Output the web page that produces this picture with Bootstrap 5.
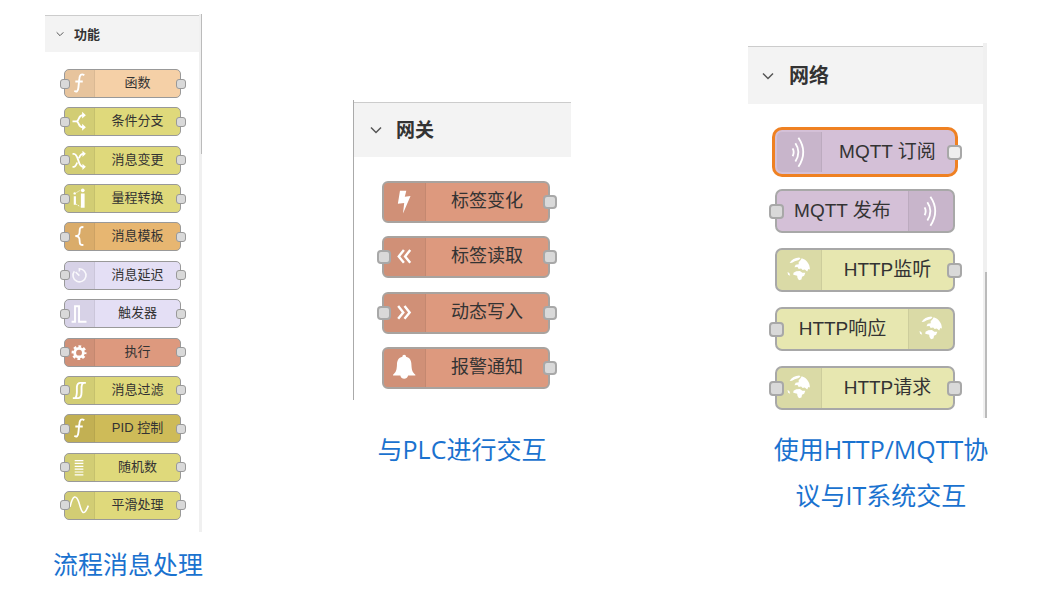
<!DOCTYPE html>
<html lang="zh-CN">
<head>
<meta charset="utf-8">
<meta name="viewport" content="width=device-width, initial-scale=1">
<title>节点面板</title>
<link href="https://cdn.jsdelivr.net/npm/bootstrap@5.3.0/dist/css/bootstrap.min.css" rel="stylesheet">
<style>
  body { background: #fff; color: #333; font-family: "Liberation Sans", "Noto Sans CJK SC", sans-serif; }

  /* three palettes separated by proportional gutters */
  .board { display: grid; grid-template-columns: 157fr 151fr 218fr 177fr 239fr; padding: 0 58px 0 45px; align-items: start; }
  .board > section { min-width: 0; }
  .board > :nth-child(2) { grid-column: 3; }
  .board > :nth-child(3) { grid-column: 5; }
  .col-flow { padding-top: 14px; }
  .col-gateway { padding-top: 100px; }
  .col-network { padding-top: 43px; }

  .palette-head { background: #f3f3f3; border: 0; border-top: 1px solid #ccc; color: #333; font-weight: 700; line-height: 1; }
  .rail { flex: none; background: #f0f0f0; }
  .thumb { background: #bbb; }

  .node { position: relative; display: flex; border: 1px solid #999; background: var(--fill); color: #333; line-height: 1; }
  .node-icon { flex: none; background: rgba(0,0,0,.055); border-right: 1px solid rgba(0,0,0,.06); }
  .node.flip { flex-direction: row-reverse; }
  .node.flip .node-icon { border-right: 0; border-left: 1px solid rgba(0,0,0,.06); }
  .node-icon svg { display: block; width: 100%; height: 100%; fill: none; stroke: #fff; stroke-width: 6; }
  .node-name { flex: 1; display: flex; align-items: center; justify-content: center; padding-bottom: 2px; white-space: nowrap; }
  .port { position: absolute; top: 0; bottom: 0; margin: auto 0; background: #d9d9d9; border: 1px solid #999; }

  .flow .palette-head { height: 37px; padding: 0 11px; font-size: 13px; gap: 10px; margin-top: 1px; }
  .flow .palette-head svg { width: 8px; }
  .flow .palette-body { min-height: 480px; padding: 17px 18px 12px 19px; }
  .flow .node { height: 29px; border-radius: 5px; font-size: 13px; }
  .flow .node-icon { width: 30px; border-radius: 4px 0 0 4px; }
  .flow .port { width: 10px; height: 10px; border-radius: 3px; }
  .flow .port-in { left: -5px; }
  .flow .port-out { right: -6px; }
  .flow .rail { width: 3px; }
  .flow .thumb { width: 1px; height: 27%; margin-left: 2px; }

  .gateway .palette-head { height: 55px; padding: 0 16px; font-size: 19px; gap: 14px; margin-top: 2px; }
  .gateway .palette-head svg { width: 12px; }
  .gateway .palette-body { min-height: 243px; padding: 24px 21px 11px 28px; }
  .gateway .node { height: 42px; border-radius: 6px; font-size: 18px; border-width: 2px; border-color: #a8a39f; }
  .gateway .node-icon { width: 42px; border-radius: 4px 0 0 4px; }
  .gateway .port { width: 14px; height: 14px; border-radius: 4px; border-width: 2px; border-color: #a8a8a8; }
  .gateway .port-in { left: -7px; }
  .gateway .port-out { right: -9px; }
  .gateway .rail { width: 1px; background: #aaa; }

  .network .palette-head { height: 58px; padding: 0 14px; font-size: 20px; gap: 15px; margin-top: 3px; }
  .network .palette-head svg { width: 12px; }
  .network .palette-body { padding: 26px 28px 8px 27px; gap: 15px; }
  .network .node { height: 44px; border-radius: 7px; font-size: 19px; border-width: 2px; border-color: #a8a8a8; }
  .network .node-icon { width: 45px; border-radius: 5px 0 0 5px; }
  .network .flip .node-icon { border-radius: 0 5px 5px 0; }
  .network .port { width: 15px; height: 15px; border-radius: 4px; border-width: 2px; border-color: #a8a8a8; }
  .network .port-in { left: -8px; }
  .network .port-out { right: -9px; }
  .network .rail { width: 4px; }
  .network .thumb { width: 2px; height: 39%; }
  .network .node.selected { border-color: var(--fill); box-shadow: 0 0 0 3px #ef8122; }
  .network .selected .port { background: #eee; }

  .f-peach { --fill: #f5d0a7; }
  .f-olive { --fill: #dfd97b; }
  .f-amber { --fill: #e7b671; }
  .f-lilac { --fill: #e4dff5; }
  .f-coral { --fill: #dd997e; }
  .f-gold { --fill: #cebb58; }
  .f-mauve { --fill: #d4c0d7; }
  .f-lime { --fill: #e7e7b0; }

  .caption { color: #1a72cf; font-family: "Open Sans", "Noto Sans CJK SC", sans-serif; font-size: 25px; line-height: 46px; white-space: nowrap; }
  .col-flow .caption { padding: 9px 0 0 9px; }
  .col-gateway .caption { padding-top: 26px; }
  .col-network .caption { padding: 8px 0 0 27px; }

  @media (max-width: 767px) {
    .board { display: block; padding: 0 24px; }
    .col-flow, .col-gateway, .col-network { padding-top: 24px; }
  }
</style>
</head>
<body>
<svg class="d-none" aria-hidden="true">
  <symbol id="chev" viewBox="0 0 12 8"><path d="M1 1.5 6 6.5 11 1.5" fill="none" stroke="#555" stroke-width="1.5"/></symbol>
  <symbol id="fn" viewBox="0 0 93 87"><path d="M62 17C53 10 47 16 46 28L43 56C42 69 37 72 30 67M33 37H57"/></symbol>
  <symbol id="branch" viewBox="0 0 93 87"><path d="M24 43H38M38 43C47 38 42 23 58 23M38 43C47 48 42 62 58 62"/><path d="M55 12 67 23 55 34ZM55 51 67 62 55 73Z" fill="#fff" stroke="none"/></symbol>
  <symbol id="change" viewBox="0 0 93 87"><path d="M24 22H28C45 22 40 64 58 64M24 64H28C33 64 36 58 39 50M45 36C48 27 51 22 58 22"/><path d="M56 12 67 22 56 32ZM56 54 67 64 56 74Z" fill="#fff" stroke="none"/></symbol>
  <symbol id="range" viewBox="0 0 93 87"><path d="M28 36h7v28h-7zM51 27h12v46H51z" fill="#fff" stroke="none"/><circle cx="31" cy="27" r="4" fill="#fff" stroke="none"/><circle cx="57" cy="17" r="6" fill="#fff" stroke="none"/><path d="M37 24 49 17M36 62 49 70" stroke-width="3" stroke-dasharray="4 3"/></symbol>
  <symbol id="brace" viewBox="0 0 93 87"><path d="M59 13C48 13 47 17 47 26C47 36 45 42 33 42C45 42 47 48 47 58C47 67 48 71 59 71"/></symbol>
  <symbol id="timer" viewBox="0 0 93 87"><path d="M46 31V22A21 21 0 1 1 30 30M34 32 46 44" stroke-width="5" opacity=".85"/></symbol>
  <symbol id="pulse" viewBox="0 0 93 87"><path d="M21 70H32V20H45V70H69"/></symbol>
  <symbol id="gear" viewBox="0 0 93 87"><circle cx="45" cy="44" r="14" stroke-width="9"/><circle cx="45" cy="44" r="20" stroke-width="8" stroke-dasharray="8.700 7.008" stroke-dashoffset="4.350"/></symbol>
  <symbol id="filter" viewBox="0 0 93 87"><path d="M25 68H31C37 67 37 60 38 50V32C39 23 42 19 49 19H67M28 68H43C51 67 53 60 53 50V32C54 23 57 19 62 19"/></symbol>
  <symbol id="rows" viewBox="0 0 93 87"><path d="M31 21H59M31 30H59M31 40H59M31 49H59M31 58H59M31 67H59" stroke-width="4"/></symbol>
  <symbol id="sine" viewBox="0 0 93 87"><path d="M16 48C25 8 36 8 45 35C52 60 58 86 75 44" stroke-width="5"/></symbol>
  <symbol id="bolt" viewBox="0 0 132 126"><path d="M51 26H72L67 46 86 43 61 101 65 66 44 69Z" fill="#fff" stroke="none"/></symbol>
  <symbol id="left" viewBox="0 0 132 126"><path d="M64 40 47 61 64 82M85 40 68 61 85 82" stroke-width="8"/></symbol>
  <symbol id="right" viewBox="0 0 132 126"><path d="M45 40 62 61 45 82M66 40 83 61 66 82" stroke-width="8"/></symbol>
  <symbol id="bell" viewBox="0 0 132 126"><path d="M65 19C69 19 71 22 71 26C84 29 89 39 89 53C90 70 92 77 102 85V88H78C76 95 71 99 65 99C59 99 54 95 52 88H28V85C38 77 40 70 41 53C41 39 46 29 59 26C59 22 61 19 65 19Z" fill="#fff" stroke="none"/></symbol>
  <symbol id="waves" viewBox="0 0 138 132"><path d="M48 54Q55 66 48 80M57 37Q77 66 57 97M67 19Q99 66 67 115"/></symbol>
  <symbol id="globe" viewBox="0 0 138 132"><path d="M38 43C44 32 56 26 70 25L74 29 66 34 55 37 46 42ZM72 36 78 27C94 32 105 46 105 64L100 63 96 71 88 64 81 66 76 61 68 63 64 56 54 57 58 49 68 47 68 40ZM51 75 60 70 72 69 80 75 90 75 86 85 79 88 77 97 69 100 64 92 63 85 50 82ZM31 73 37 76 40 85 33 82Z" fill="#fff" stroke="none"/></symbol>
</svg>

<main class="board">
  <section class="col-flow">
    <div class="flow d-flex">
      <div class="flex-grow-1">
        <button type="button" class="palette-head d-flex align-items-center w-100" data-bs-toggle="collapse" data-bs-target="#p1" aria-expanded="true"><svg height="8"><use href="#chev"/></svg>功能</button>
        <div class="collapse show" id="p1"><ul class="palette-body list-unstyled mb-0 d-flex flex-column justify-content-between">
          <li class="node f-peach"><span class="node-icon"><svg><use href="#fn"/></svg></span><span class="node-name">函数</span><i class="port port-in"></i><i class="port port-out"></i></li>
          <li class="node f-olive"><span class="node-icon"><svg><use href="#branch"/></svg></span><span class="node-name">条件分支</span><i class="port port-in"></i><i class="port port-out"></i></li>
          <li class="node f-olive"><span class="node-icon"><svg><use href="#change"/></svg></span><span class="node-name">消息变更</span><i class="port port-in"></i><i class="port port-out"></i></li>
          <li class="node f-olive"><span class="node-icon"><svg><use href="#range"/></svg></span><span class="node-name">量程转换</span><i class="port port-in"></i><i class="port port-out"></i></li>
          <li class="node f-amber"><span class="node-icon"><svg><use href="#brace"/></svg></span><span class="node-name">消息模板</span><i class="port port-in"></i><i class="port port-out"></i></li>
          <li class="node f-lilac"><span class="node-icon"><svg><use href="#timer"/></svg></span><span class="node-name">消息延迟</span><i class="port port-in"></i><i class="port port-out"></i></li>
          <li class="node f-lilac"><span class="node-icon"><svg><use href="#pulse"/></svg></span><span class="node-name">触发器</span><i class="port port-in"></i><i class="port port-out"></i></li>
          <li class="node f-coral"><span class="node-icon"><svg><use href="#gear"/></svg></span><span class="node-name">执行</span><i class="port port-in"></i><i class="port port-out"></i></li>
          <li class="node f-olive"><span class="node-icon"><svg><use href="#filter"/></svg></span><span class="node-name">消息过滤</span><i class="port port-in"></i><i class="port port-out"></i></li>
          <li class="node f-gold"><span class="node-icon"><svg><use href="#fn"/></svg></span><span class="node-name">PID 控制</span><i class="port port-in"></i><i class="port port-out"></i></li>
          <li class="node f-olive"><span class="node-icon"><svg><use href="#rows"/></svg></span><span class="node-name">随机数</span><i class="port port-in"></i><i class="port port-out"></i></li>
          <li class="node f-olive"><span class="node-icon"><svg><use href="#sine"/></svg></span><span class="node-name">平滑处理</span><i class="port port-in"></i><i class="port port-out"></i></li>
        </ul></div>
      </div>
      <div class="rail"><div class="thumb"></div></div>
    </div>
    <div class="caption d-flex flex-column align-items-center"><span>流程消息处理</span></div>
  </section>

  <section class="col-gateway">
    <div class="gateway d-flex">
      <div class="rail"></div>
      <div class="flex-grow-1">
        <button type="button" class="palette-head d-flex align-items-center w-100" data-bs-toggle="collapse" data-bs-target="#p2" aria-expanded="true"><svg height="8"><use href="#chev"/></svg>网关</button>
        <div class="collapse show" id="p2"><ul class="palette-body list-unstyled mb-0 d-flex flex-column justify-content-between">
          <li class="node f-coral"><span class="node-icon"><svg><use href="#bolt"/></svg></span><span class="node-name">标签变化</span><i class="port port-out"></i></li>
          <li class="node f-coral"><span class="node-icon"><svg><use href="#left"/></svg></span><span class="node-name">标签读取</span><i class="port port-in"></i><i class="port port-out"></i></li>
          <li class="node f-coral"><span class="node-icon"><svg><use href="#right"/></svg></span><span class="node-name">动态写入</span><i class="port port-in"></i><i class="port port-out"></i></li>
          <li class="node f-coral"><span class="node-icon"><svg><use href="#bell"/></svg></span><span class="node-name">报警通知</span><i class="port port-out"></i></li>
        </ul></div>
      </div>
    </div>
    <div class="caption d-flex flex-column align-items-center"><span>与PLC进行交互</span></div>
  </section>

  <section class="col-network">
    <div class="network d-flex">
      <div class="flex-grow-1">
        <button type="button" class="palette-head d-flex align-items-center w-100" data-bs-toggle="collapse" data-bs-target="#p3" aria-expanded="true"><svg height="8"><use href="#chev"/></svg>网络</button>
        <div class="collapse show" id="p3"><ul class="palette-body list-unstyled mb-0 d-flex flex-column">
          <li class="node f-mauve selected"><span class="node-icon"><svg><use href="#waves"/></svg></span><span class="node-name">MQTT 订阅</span><i class="port port-out"></i></li>
          <li class="node f-mauve flip"><span class="node-icon"><svg><use href="#waves"/></svg></span><span class="node-name">MQTT 发布</span><i class="port port-in"></i></li>
          <li class="node f-lime"><span class="node-icon"><svg><use href="#globe"/></svg></span><span class="node-name">HTTP监听</span><i class="port port-out"></i></li>
          <li class="node f-lime flip"><span class="node-icon"><svg><use href="#globe"/></svg></span><span class="node-name">HTTP响应</span><i class="port port-in"></i></li>
          <li class="node f-lime"><span class="node-icon"><svg><use href="#globe"/></svg></span><span class="node-name">HTTP请求</span><i class="port port-in"></i><i class="port port-out"></i></li>
        </ul></div>
      </div>
      <div class="rail d-flex align-items-end justify-content-end"><div class="thumb"></div></div>
    </div>
    <div class="caption d-flex flex-column align-items-center"><span>使用HTTP/MQTT协</span><span>议与IT系统交互</span></div>
  </section>
</main>
<script src="https://cdn.jsdelivr.net/npm/bootstrap@5.3.0/dist/js/bootstrap.bundle.min.js"></script>
</body>
</html>
